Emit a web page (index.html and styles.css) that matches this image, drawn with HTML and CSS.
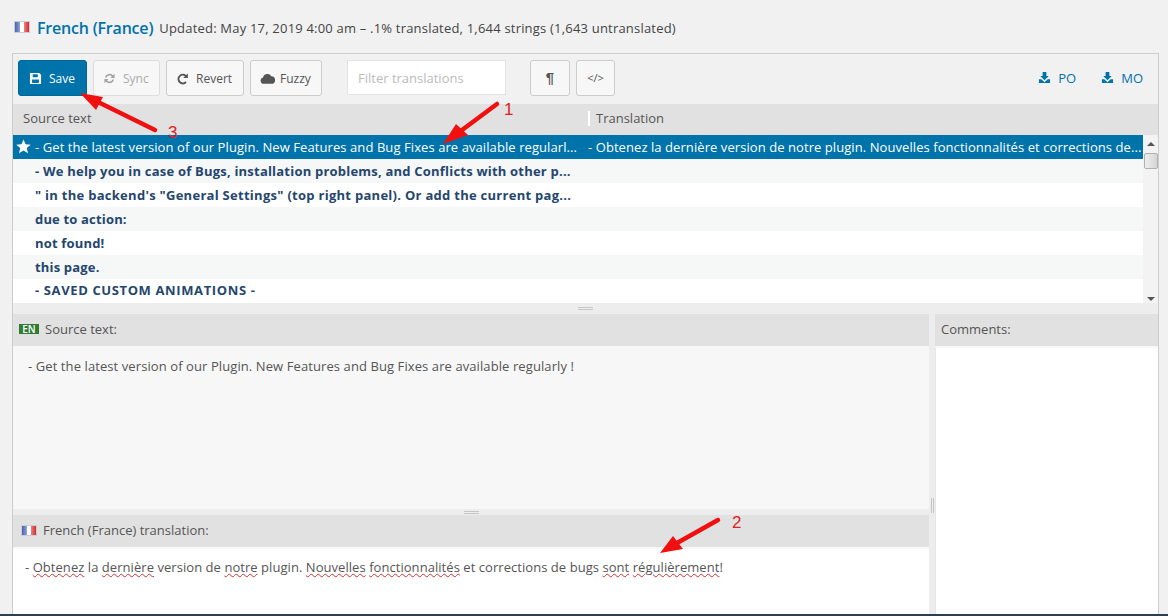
FILE: index.html
```html
<!DOCTYPE html>
<html>
<head>
<meta charset="utf-8"/>
<title>French (France)</title>
<link rel="stylesheet" href="styles.css">
</head>
<body>

<div class="title-row">
  <span class="flag"><i></i><i></i><i></i></span>
  <a class="locale">French (France)</a>
  <span class="stats">Updated: May 17, 2019 4:00 am – .1% translated, 1,644 strings (1,643 untranslated)</span>
</div>

<div class="editor">
  <div class="toolbar">
    <button class="btn btn-save">
      <svg class="ico" viewBox="0 0 14 14"><path fill-rule="evenodd" d="M1 1h10l2 2v10H1z M4 2.300v3.400h5.500V2.300z M3.300 8v3.800h7.400V8z"/></svg>
      Save
    </button>
    <button class="btn btn-off">
      <svg class="ico" viewBox="0 0 14 14"><path d="M2 6a5.200 5.200 0 0 1 8.800-2.600L12.500 2v4.500H8l1.600-1.700A3.500 3.500 0 0 0 3.800 6z"/><path d="M12 8a5.200 5.200 0 0 1-8.800 2.600L1.500 12V7.500H6L4.400 9.200A3.500 3.500 0 0 0 10.200 8z"/></svg>
      Sync
    </button>
    <button class="btn btn-revert">
      <svg class="ico" viewBox="0 0 14 14"><path d="M12.800 1.500v5h-5l1.800-1.800A3.600 3.600 0 1 0 10 10l1.500 1.600A5.700 5.700 0 1 1 11 3.300z"/></svg>
      Revert
    </button>
    <button class="btn btn-fuzzy">
      <svg class="ico ico-cloud" viewBox="0 0 14 14"><path d="M3.500 12a3 3 0 0 1-.7-5.900A4.200 4.200 0 0 1 10.600 5 3.500 3.500 0 0 1 10.500 12z"/></svg>
      Fuzzy
    </button>
    <div class="filter">Filter translations</div>
    <button class="btn btn-square btn-pilcrow">¶</button>
    <button class="btn btn-square btn-code">&lt;/&gt;</button>
    <div class="downloads">
      <a class="dl">
        <svg class="ico" viewBox="0 0 14 14"><path d="M5 1h4v4.500h2.500L7 10 2.500 5.500H5z"/><path d="M1 9h2.500L7 12l3.500-3H13v4H1z"/></svg>
        PO
      </a>
      <a class="dl">
        <svg class="ico" viewBox="0 0 14 14"><path d="M5 1h4v4.500h2.500L7 10 2.500 5.500H5z"/><path d="M1 9h2.500L7 12l3.500-3H13v4H1z"/></svg>
        MO
      </a>
    </div>
  </div>

  <div class="list-head">
    <div class="col-src">Source text</div>
    <div class="col-trg">Translation</div>
  </div>

  <div class="list">
    <div class="rows">
      <div class="row selected">
        <svg class="star" viewBox="0 0 16 16"><polygon points="8,0.500 10.200,5.600 15.700,6.100 11.500,9.700 12.800,15.100 8,12.300 3.200,15.100 4.500,9.700 0.300,6.100 5.800,5.600"/></svg>
        <div class="cell-src">- Get the latest version of our Plugin. New Features and Bug Fixes are available regularl...</div>
        <div class="cell-trg">- Obtenez la dernière version de notre plugin. Nouvelles fonctionnalités et corrections de...</div>
      </div>
      <div class="row"><div class="cell-src">- We help you in case of Bugs, installation problems, and Conflicts with other p...</div></div>
      <div class="row"><div class="cell-src">" in the backend's "General Settings" (top right panel). Or add the current pag...</div></div>
      <div class="row"><div class="cell-src">due to action:</div></div>
      <div class="row"><div class="cell-src">not found!</div></div>
      <div class="row"><div class="cell-src">this page.</div></div>
      <div class="row"><div class="cell-src">- SAVED CUSTOM ANIMATIONS -</div></div>
    </div>
    <div class="scrollbar">
      <span class="arrow-up"></span>
      <span class="thumb"></span>
      <span class="arrow-down"></span>
    </div>
  </div>

  <div class="split-h"><span class="grip-h"></span></div>

  <div class="lower">
    <div class="left-pane">
      <div class="pane-head"><span class="badge">EN</span>Source text:</div>
      <div class="source-body">- Get the latest version of our Plugin. New Features and Bug Fixes are available regularly !</div>
      <div class="split-h split-small"><span class="grip-h"></span></div>
      <div class="pane-head">
        <span class="flag flag-small"><i></i><i></i><i></i></span>French (France) translation:
      </div>
      <div class="target-body">- <u>Obtenez</u> la <u>dernière</u> version de <u>notre</u> plugin. <u>Nouvelles</u> <u>fonctionnalités</u> et corrections de bugs <u>sont</u> <u>régulièrement</u>!</div>
    </div>
    <div class="split-v"><span class="grip-v"></span></div>
    <div class="right-pane">
      <div class="pane-head">Comments:</div>
      <div class="comments-body"></div>
    </div>
  </div>
</div>

<div class="bottom-edge"></div>

<!-- annotations drawn over the screenshot -->
<svg class="notes" viewBox="0 0 1168 616">
  <g class="note-arrow">
    <line x1="497" y1="104" x2="458" y2="133"/>
    <polygon points="443,144 456,124 468,135"/>
    <line x1="718" y1="520" x2="677" y2="543"/>
    <polygon points="660,553 673,536 683,549"/>
    <line x1="155" y1="130" x2="98" y2="102"/>
    <polygon points="80,93 103,97 96,110"/>
  </g>
  <g class="note-num">
    <text x="504" y="115">1</text>
    <text x="732" y="528">2</text>
    <text x="168" y="138">3</text>
  </g>
</svg>

</body>
</html>
```

FILE: styles.css
```css
* {
   box-sizing: border-box;
}

html, body {
   margin: 0;
   height: 616px;
   overflow: hidden;
}

body {
   position: relative;
   display: flex;
   flex-direction: column;
   background-color: #f1f1f1;
   color: #444;
   font-family: "Open Sans", sans-serif;
   font-size: 13px;
}

/* title line */
.title-row {
   height: 53px;
   flex: none;
   display: flex;
   align-items: center;
   padding: 3px 0 0 14px;
}

.flag {
   display: flex;
   width: 16px;
   height: 12px;
   margin: 0 7px 3px 0;
   border: 1px solid #c8ccd8;
}

.flag i {
   flex: 1;
   background-color: #fff;
}

.flag i:first-child {
   background: linear-gradient(to right, #4a62a8, #8fa4dc);
}

.flag i:last-child {
   background: linear-gradient(to right, #f08080, #d42a2a);
}

.flag-small {
   height: 11px;
   margin: 0 6px 0 2px;
}

.locale {
   color: #0073aa;
   font-size: 16px;
   font-weight: 600;
   letter-spacing: -0.2px;
   margin-right: 6px;
}

.stats {
   color: #444;
   font-size: 13px;
   letter-spacing: 0.2px;
}

/* main box */
.editor {
   flex: 1;
   min-height: 0;
   margin: 0 9px 0 12px;
   border: 1px solid #ccc;
   border-bottom: none;
   display: flex;
   flex-direction: column;
}

.toolbar {
   height: 50px;
   flex: none;
   display: flex;
   align-items: center;
   padding: 0 15px 3px 5px;
}

.btn {
   height: 36px;
   display: flex;
   align-items: center;
   gap: 7px;
   padding: 2px 9px 0;
   margin-right: 6px;
   border: 1px solid #ccc;
   border-radius: 3px;
   background-color: #f7f7f7;
   color: #555;
   font-family: inherit;
   font-size: 12px;
}

.ico {
   width: 13px;
   height: 13px;
   fill: currentColor;
   flex: none;
}

.ico-cloud {
   width: 15px;
   height: 15px;
}

.btn-save {
   width: 69px;
   padding-left: 10px;
   background-color: #0073aa;
   border-color: #006799;
   color: #fff;
}

.btn-off {
   width: 67px;
   border-color: #ddd;
   color: #aaa;
}

.btn-off .ico {
   color: #a5a5a5;
}

.btn-revert {
   width: 78px;
}

.btn-fuzzy {
   width: 72px;
   gap: 5px;
}

.btn-square {
   width: 40px;
   justify-content: center;
   padding: 0;
}

.btn-pilcrow {
   font-family: "Liberation Sans", sans-serif;
   font-size: 15px;
   font-weight: bold;
}

.btn-code {
   width: 39px;
   font-size: 11px;
}

.filter {
   width: 159px;
   height: 35px;
   margin: 0 24px 0 19px;
   padding: 0 10px;
   display: flex;
   align-items: center;
   background-color: #fff;
   border: 1px solid #e3e3e3;
   color: #bbb;
   font-size: 13px;
}

.downloads {
   margin-left: auto;
   display: flex;
   gap: 25px;
}

.dl {
   display: flex;
   align-items: center;
   gap: 7px;
   color: #0073aa;
   font-size: 13px;
}

/* string list */
.list-head {
   height: 31px;
   flex: none;
   display: flex;
   align-items: center;
   padding-bottom: 3px;
   background-color: #e1e1e1;
   color: #555;
}

.col-src {
   width: 575px;
   padding-left: 10px;
}

.col-trg {
   padding-left: 6px;
   border-left: 2px solid #fff;
   line-height: 15px;
}

.list {
   height: 168px;
   flex: none;
   display: flex;
   background-color: #fff;
}

.rows {
   flex: 1;
   min-width: 0;
}

.row {
   position: relative;
   height: 24px;
   display: flex;
   align-items: center;
   background-color: #fff;
   color: #24466e;
   font-weight: 700;
   letter-spacing: 0.17px;
}

.row:nth-child(even) {
   background-color: #f6f7f7;
}

.row:nth-child(2) {
   letter-spacing: 0.21px;
}

.row:nth-child(3) {
   letter-spacing: 0.28px;
}

.row:nth-child(7) {
   padding-bottom: 2px;
   letter-spacing: 0.62px;
}

.row.selected {
   background-color: #0073aa;
   color: #fff;
   font-weight: 400;
   letter-spacing: 0.08px;
}

.star {
   position: absolute;
   left: 3px;
   top: 4px;
   width: 15px;
   height: 15px;
   fill: #fff;
}

.cell-src {
   width: 575px;
   padding-left: 22px;
   flex: none;
   white-space: nowrap;
}

.cell-trg {
   flex: 1;
   min-width: 0;
   letter-spacing: 0.07px;
   white-space: nowrap;
}

.scrollbar {
   width: 15px;
   flex: none;
   display: flex;
   flex-direction: column;
   align-items: center;
   background-color: #f3f3f3;
}

.arrow-up, .arrow-down {
   width: 0;
   height: 0;
   border-left: 4px solid transparent;
   border-right: 4px solid transparent;
}

.arrow-up {
   margin-top: 7px;
   border-bottom: 4px solid #555;
}

.arrow-down {
   margin-top: auto;
   margin-bottom: 2px;
   border-top: 4px solid #555;
}

.thumb {
   width: 14px;
   height: 16px;
   margin-top: 7px;
   background: linear-gradient(to right, #eee, #d5d5d5);
   border: 1px solid #b0b0b0;
   border-radius: 2px;
}

/* splitters */
.split-h {
   height: 11px;
   flex: none;
   display: flex;
   align-items: center;
   justify-content: center;
   background-color: #ededed;
}

.split-small {
   height: 6px;
   padding-top: 1px;
}

.grip-h {
   width: 15px;
   height: 3px;
   border-top: 1px solid #c6c6c6;
   border-bottom: 1px solid #c6c6c6;
}

.split-v {
   width: 6px;
   flex: none;
   display: flex;
   align-items: center;
   padding: 83px 0 0 2px;
   background-color: #ededed;
}

.grip-v {
   width: 3px;
   height: 15px;
   border-left: 1px solid #c6c6c6;
   border-right: 1px solid #c6c6c6;
}

/* lower panes */
.lower {
   flex: 1;
   min-height: 0;
   display: flex;
}

.left-pane {
   width: 916px;
   flex: none;
   display: flex;
   flex-direction: column;
}

.right-pane {
   flex: 1;
   min-width: 0;
   display: flex;
   flex-direction: column;
}

.pane-head {
   height: 34px;
   flex: none;
   display: flex;
   align-items: center;
   padding: 0 0 2px 6px;
   background-color: #e1e1e1;
   border-bottom: 2px solid #f7f7f7;
   color: #555;
}

.badge {
   width: 20px;
   height: 10px;
   margin-right: 6px;
   background-color: #2e7d32;
   color: #fff;
   font-size: 10px;
   font-weight: 600;
   line-height: 10px;
   text-align: center;
}

.source-body {
   height: 161px;
   flex: none;
   padding: 9px 15px;
   background-color: #f7f7f7;
   color: #555;
   letter-spacing: 0.09px;
}

.target-body {
   flex: 1;
   padding: 9px 12px;
   background-color: #fff;
   color: #555;
   letter-spacing: 0.05px;
}

.target-body u {
   text-decoration: underline wavy #d03030 1px;
   text-underline-offset: 1px;
}

.comments-body {
   flex: 1;
   background-color: #fff;
   border-left: 1px solid #e6e6e6;
}

.bottom-edge {
   height: 2px;
   flex: none;
   background-color: #2c3e50;
}

/* annotations */
.notes {
   position: absolute;
   left: 0;
   top: 0;
   width: 1168px;
   height: 616px;
   pointer-events: none;
}

.note-arrow line {
   stroke: #f01010;
   stroke-width: 4.5;
   stroke-linecap: round;
}

.note-arrow polygon {
   fill: #f01010;
}

.note-num text {
   fill: #e02020;
   font-family: "Liberation Sans", sans-serif;
   font-size: 17px;
}
```
